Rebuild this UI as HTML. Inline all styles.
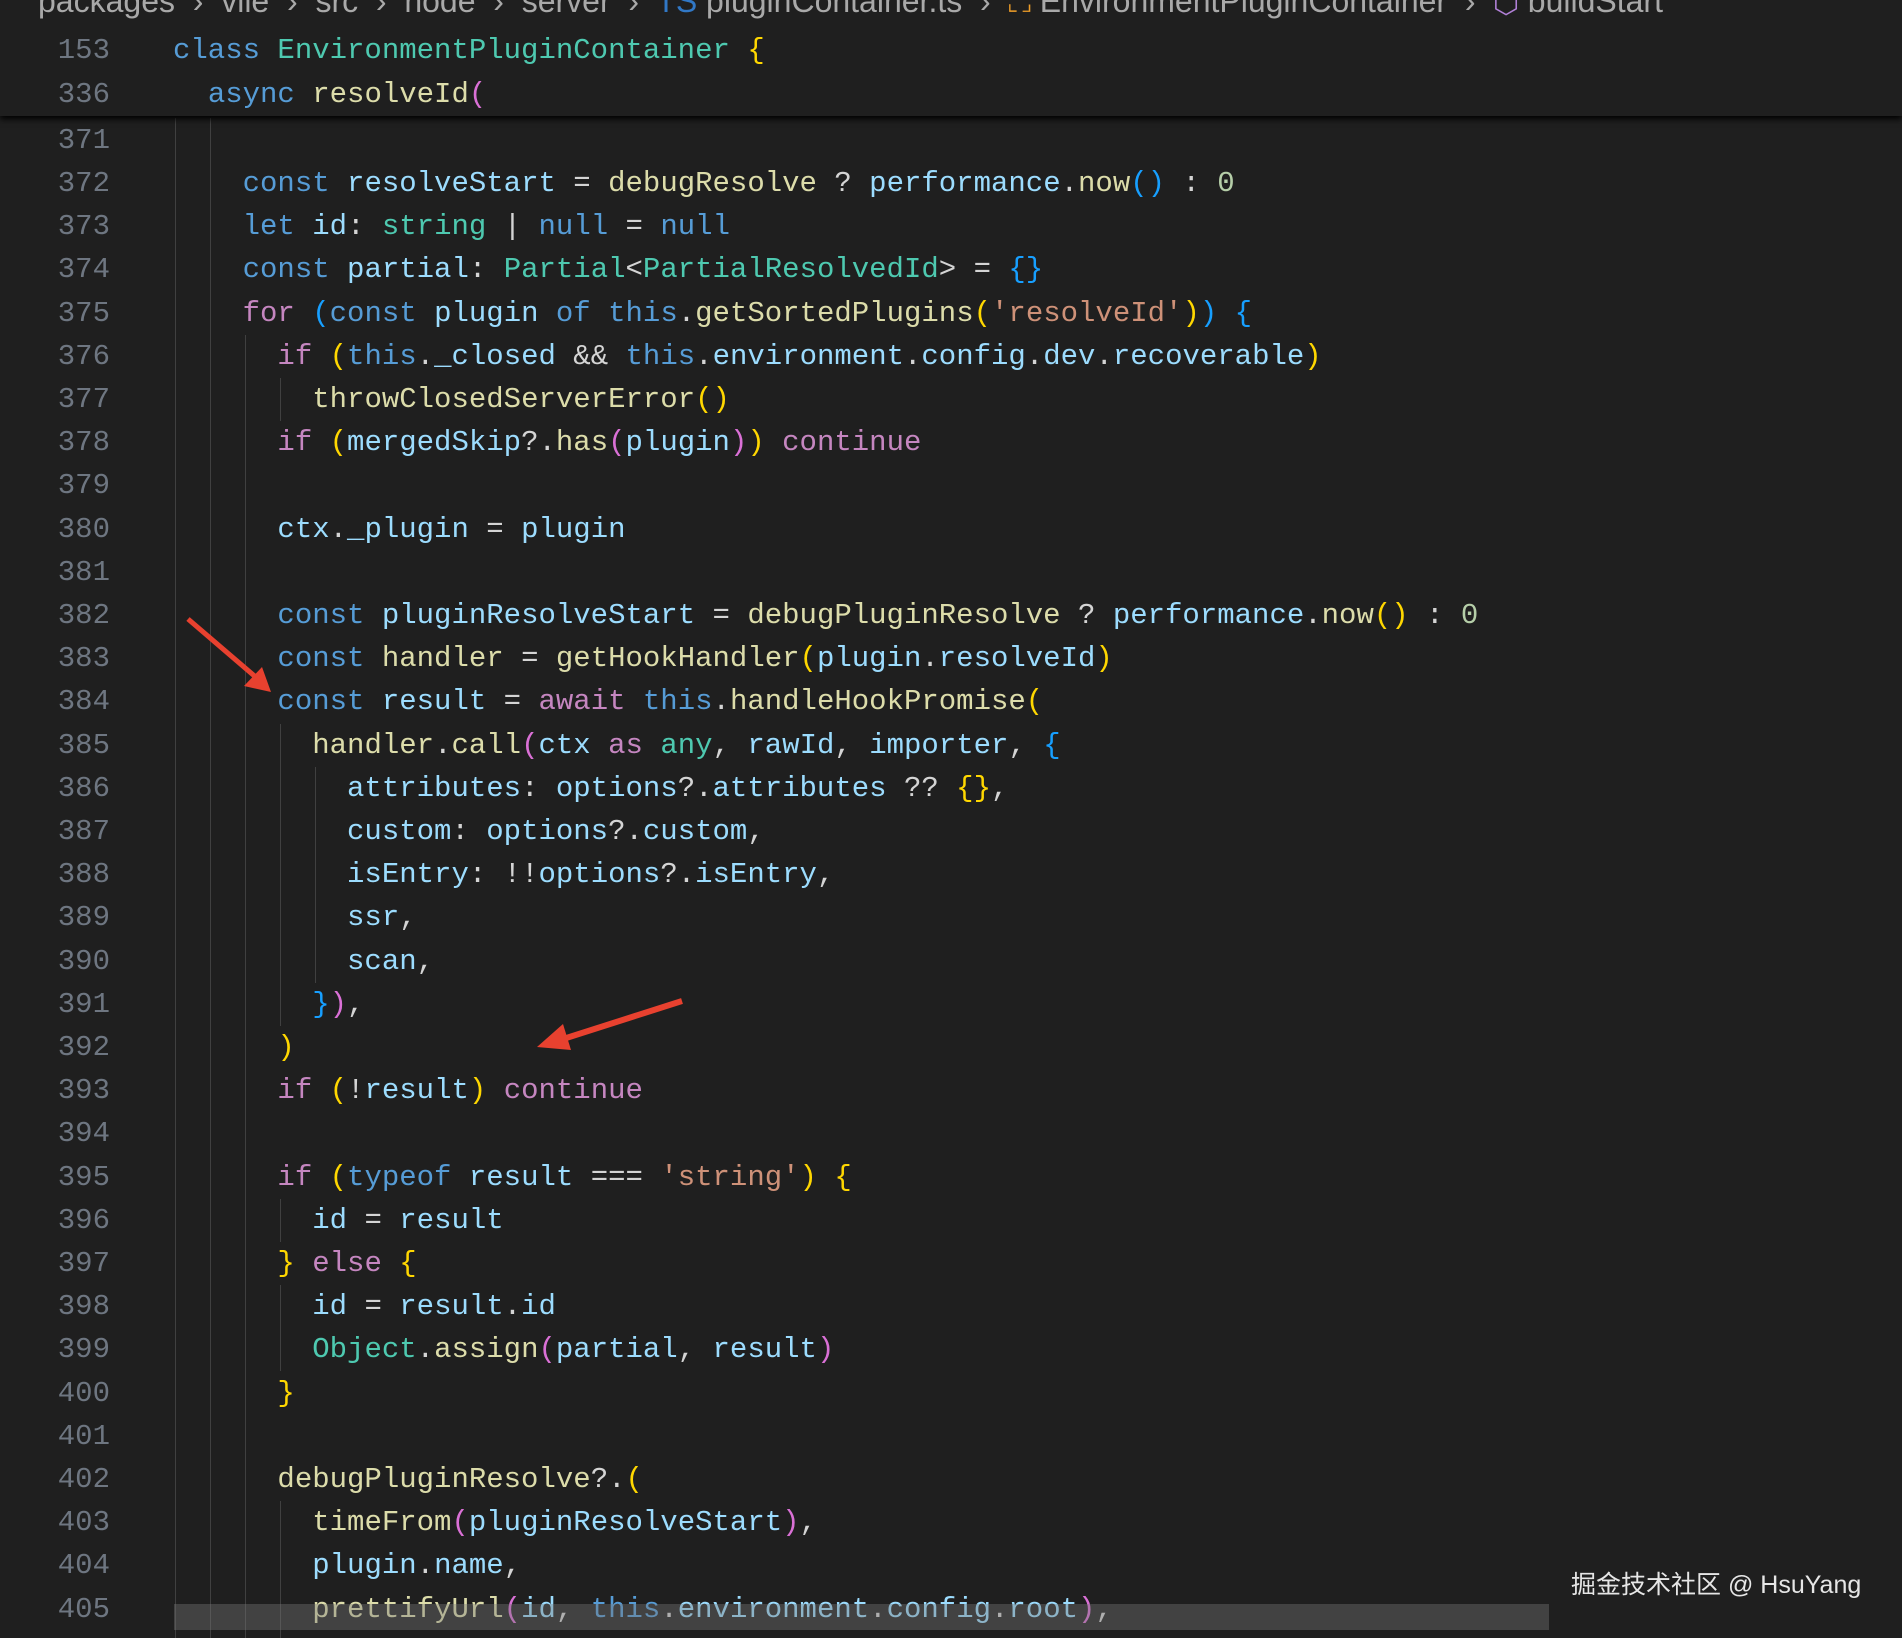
<!DOCTYPE html>
<html><head><meta charset="utf-8">
<style>
html,body{margin:0;padding:0;}
body{width:1902px;height:1638px;background:#1f1f1f;position:relative;overflow:hidden;font-family:"Liberation Mono",monospace;}
.row{position:absolute;left:0;height:43.2px;line-height:43.2px;font-size:29px;white-space:pre;color:#d4d4d4;}
.ln{position:absolute;left:0;width:110px;text-align:right;color:#6e7681;}
.code{position:absolute;left:173px;}
.k{color:#569cd6}.c{color:#c586c0}.v{color:#9cdcfe}.f{color:#dcdcaa}.t{color:#4ec9b0}.s{color:#ce9178}.n{color:#b5cea8}
.p1{color:#ffd700}.p2{color:#da70d6}.p3{color:#179fff}
.g{position:absolute;width:1px;background:#404040;}
#hdr{position:absolute;left:0;top:0;width:1902px;height:116px;background:#1f1f1f;box-shadow:0 3px 6px #000;z-index:2;}
.bc{position:absolute;left:38px;top:-17px;font-family:"Liberation Sans",sans-serif;font-size:32px;color:#a9a9a9;white-space:pre;}
</style></head><body>
<div id="hdr">
<div class="bc">packages  ›  vile  ›  src  ›  node  ›  server  ›  <span style="color:#3178c6">TS</span> pluginContainer.ts  ›  <span style="color:#ee9d28">⛶</span> EnvironmentPluginContainer  ›  <span style="color:#b180d7">⬡</span> buildStart</div>
<div class="row" style="top:29px;width:1902px"><span class="ln">153</span><span class="code"><span class="k">class</span> <span class="t">EnvironmentPluginContainer</span> <span class="p1">{</span></span></div>
<div class="row" style="top:73px;width:1902px"><span class="ln">336</span><span class="code">  <span class="k">async</span> <span class="f">resolveId</span><span class="p2">(</span></span></div>
</div>

<div class="g" style="left:175px;top:118px;height:1520px"></div>
<div class="g" style="left:210px;top:118px;height:1520px"></div>
<div class="g" style="left:245px;top:335px;height:1303px"></div>
<div class="g" style="left:280px;top:378px;height:43px"></div>
<div class="g" style="left:280px;top:724px;height:302px"></div>
<div class="g" style="left:315px;top:767px;height:216px"></div>
<div class="g" style="left:280px;top:1199px;height:43px"></div>
<div class="g" style="left:280px;top:1285px;height:86px"></div>
<div class="g" style="left:280px;top:1501px;height:137px"></div>

<div class="row" style="top:119px"><span class="ln">371</span></div>
<div class="row" style="top:162px"><span class="ln">372</span><span class="code">    <span class="k">const</span> <span class="v">resolveStart</span> = <span class="f">debugResolve</span> ? <span class="v">performance</span>.<span class="f">now</span><span class="p3">()</span> : <span class="n">0</span></span></div>
<div class="row" style="top:205px"><span class="ln">373</span><span class="code">    <span class="k">let</span> <span class="v">id</span>: <span class="t">string</span> | <span class="k">null</span> = <span class="k">null</span></span></div>
<div class="row" style="top:248px"><span class="ln">374</span><span class="code">    <span class="k">const</span> <span class="v">partial</span>: <span class="t">Partial</span>&lt;<span class="t">PartialResolvedId</span>&gt; = <span class="p3">{}</span></span></div>
<div class="row" style="top:292px"><span class="ln">375</span><span class="code">    <span class="c">for</span> <span class="p3">(</span><span class="k">const</span> <span class="v">plugin</span> <span class="k">of</span> <span class="k">this</span>.<span class="f">getSortedPlugins</span><span class="p1">(</span><span class="s">'resolveId'</span><span class="p1">)</span><span class="p3">)</span> <span class="p3">{</span></span></div>
<div class="row" style="top:335px"><span class="ln">376</span><span class="code">      <span class="c">if</span> <span class="p1">(</span><span class="k">this</span>.<span class="v">_closed</span> &amp;&amp; <span class="k">this</span>.<span class="v">environment</span>.<span class="v">config</span>.<span class="v">dev</span>.<span class="v">recoverable</span><span class="p1">)</span></span></div>
<div class="row" style="top:378px"><span class="ln">377</span><span class="code">        <span class="f">throwClosedServerError</span><span class="p1">()</span></span></div>
<div class="row" style="top:421px"><span class="ln">378</span><span class="code">      <span class="c">if</span> <span class="p1">(</span><span class="v">mergedSkip</span>?.<span class="f">has</span><span class="p2">(</span><span class="v">plugin</span><span class="p2">)</span><span class="p1">)</span> <span class="c">continue</span></span></div>
<div class="row" style="top:464px"><span class="ln">379</span></div>
<div class="row" style="top:508px"><span class="ln">380</span><span class="code">      <span class="v">ctx</span>.<span class="v">_plugin</span> = <span class="v">plugin</span></span></div>
<div class="row" style="top:551px"><span class="ln">381</span></div>
<div class="row" style="top:594px"><span class="ln">382</span><span class="code">      <span class="k">const</span> <span class="v">pluginResolveStart</span> = <span class="f">debugPluginResolve</span> ? <span class="v">performance</span>.<span class="f">now</span><span class="p1">()</span> : <span class="n">0</span></span></div>
<div class="row" style="top:637px"><span class="ln">383</span><span class="code">      <span class="k">const</span> <span class="f">handler</span> = <span class="f">getHookHandler</span><span class="p1">(</span><span class="v">plugin</span>.<span class="v">resolveId</span><span class="p1">)</span></span></div>
<div class="row" style="top:680px"><span class="ln">384</span><span class="code">      <span class="k">const</span> <span class="v">result</span> = <span class="c">await</span> <span class="k">this</span>.<span class="f">handleHookPromise</span><span class="p1">(</span></span></div>
<div class="row" style="top:724px"><span class="ln">385</span><span class="code">        <span class="f">handler</span>.<span class="f">call</span><span class="p2">(</span><span class="v">ctx</span> <span class="c">as</span> <span class="t">any</span>, <span class="v">rawId</span>, <span class="v">importer</span>, <span class="p3">{</span></span></div>
<div class="row" style="top:767px"><span class="ln">386</span><span class="code">          <span class="v">attributes</span>: <span class="v">options</span>?.<span class="v">attributes</span> ?? <span class="p1">{}</span>,</span></div>
<div class="row" style="top:810px"><span class="ln">387</span><span class="code">          <span class="v">custom</span>: <span class="v">options</span>?.<span class="v">custom</span>,</span></div>
<div class="row" style="top:853px"><span class="ln">388</span><span class="code">          <span class="v">isEntry</span>: !!<span class="v">options</span>?.<span class="v">isEntry</span>,</span></div>
<div class="row" style="top:896px"><span class="ln">389</span><span class="code">          <span class="v">ssr</span>,</span></div>
<div class="row" style="top:940px"><span class="ln">390</span><span class="code">          <span class="v">scan</span>,</span></div>
<div class="row" style="top:983px"><span class="ln">391</span><span class="code">        <span class="p3">}</span><span class="p2">)</span>,</span></div>
<div class="row" style="top:1026px"><span class="ln">392</span><span class="code">      <span class="p1">)</span></span></div>
<div class="row" style="top:1069px"><span class="ln">393</span><span class="code">      <span class="c">if</span> <span class="p1">(</span>!<span class="v">result</span><span class="p1">)</span> <span class="c">continue</span></span></div>
<div class="row" style="top:1112px"><span class="ln">394</span></div>
<div class="row" style="top:1156px"><span class="ln">395</span><span class="code">      <span class="c">if</span> <span class="p1">(</span><span class="k">typeof</span> <span class="v">result</span> === <span class="s">'string'</span><span class="p1">)</span> <span class="p1">{</span></span></div>
<div class="row" style="top:1199px"><span class="ln">396</span><span class="code">        <span class="v">id</span> = <span class="v">result</span></span></div>
<div class="row" style="top:1242px"><span class="ln">397</span><span class="code">      <span class="p1">}</span> <span class="c">else</span> <span class="p1">{</span></span></div>
<div class="row" style="top:1285px"><span class="ln">398</span><span class="code">        <span class="v">id</span> = <span class="v">result</span>.<span class="v">id</span></span></div>
<div class="row" style="top:1328px"><span class="ln">399</span><span class="code">        <span class="t">Object</span>.<span class="f">assign</span><span class="p2">(</span><span class="v">partial</span>, <span class="v">result</span><span class="p2">)</span></span></div>
<div class="row" style="top:1372px"><span class="ln">400</span><span class="code">      <span class="p1">}</span></span></div>
<div class="row" style="top:1415px"><span class="ln">401</span></div>
<div class="row" style="top:1458px"><span class="ln">402</span><span class="code">      <span class="f">debugPluginResolve</span>?.<span class="p1">(</span></span></div>
<div class="row" style="top:1501px"><span class="ln">403</span><span class="code">        <span class="f">timeFrom</span><span class="p2">(</span><span class="v">pluginResolveStart</span><span class="p2">)</span>,</span></div>
<div class="row" style="top:1544px"><span class="ln">404</span><span class="code">        <span class="v">plugin</span>.<span class="v">name</span>,</span></div>
<div class="row" style="top:1588px"><span class="ln">405</span><span class="code">        <span class="f">prettifyUrl</span><span class="p2">(</span><span class="v">id</span>, <span class="k">this</span>.<span class="v">environment</span>.<span class="v">config</span>.<span class="v">root</span><span class="p2">)</span>,</span></div>

<div style="position:absolute;left:174px;top:1604px;width:1375px;height:26px;background:rgba(121,121,121,0.4)"></div>

<svg style="position:absolute;left:0;top:0" width="1902" height="1638">
<line x1="188" y1="619" x2="258" y2="679" stroke="#e8412f" stroke-width="5"/>
<polygon points="271,692 244,686 262,667" fill="#e8412f"/>
<line x1="682" y1="1001" x2="560" y2="1040" stroke="#e8412f" stroke-width="6"/>
<polygon points="537,1047 563,1024 571,1050" fill="#e8412f"/>
</svg>

<div style="position:absolute;left:1571px;top:1565px;font-family:'Liberation Sans','Noto Sans CJK SC',sans-serif;font-size:25px;color:#e6e6e6;white-space:pre">掘金技术社区 @ HsuYang</div>
</body></html>
